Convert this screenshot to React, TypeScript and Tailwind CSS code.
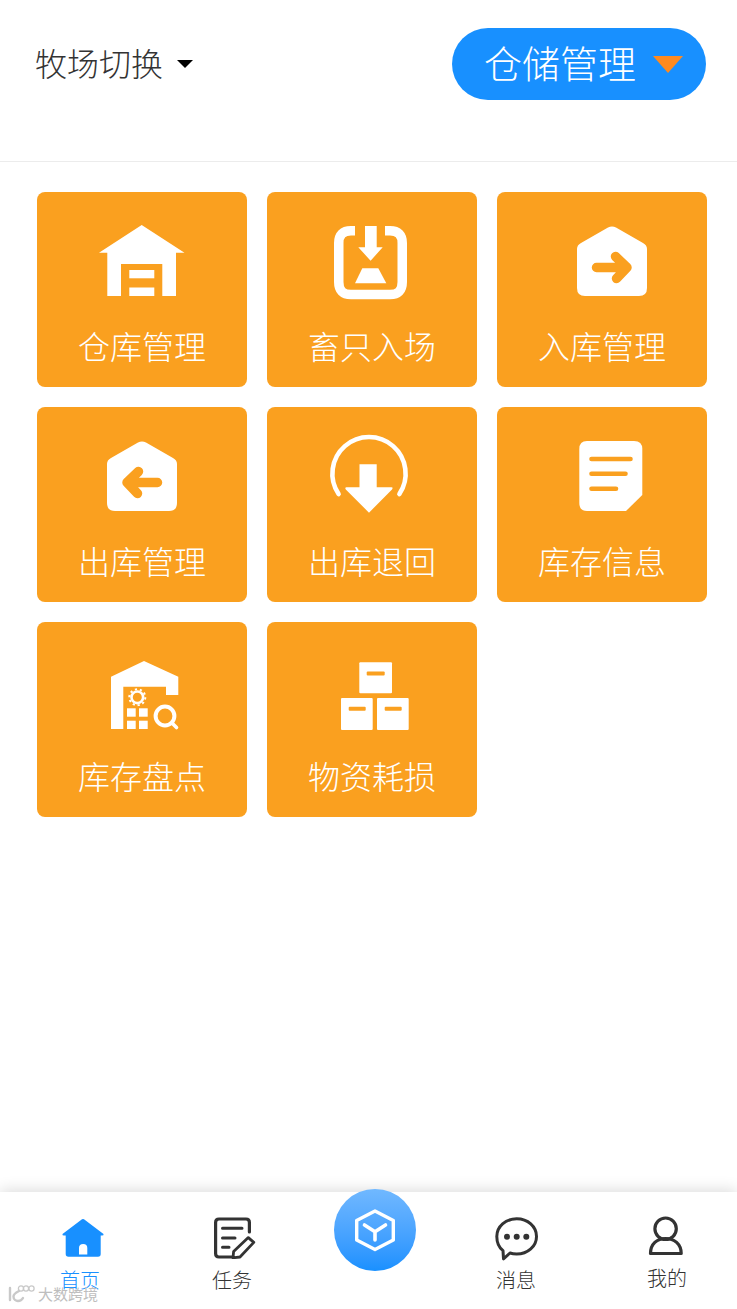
import React from "react";

const O = "#faa01f";
const W = "#ffffff";

function Icon({ vb, children }: { vb: string; children: React.ReactNode }) {
  return (
    <svg width={100} height={90} viewBox={vb} className="block">
      {children}
    </svg>
  );
}

const house = (x: number, y: number) =>
  `M${x} ${y + 23} Q${x} ${y + 19} ${x + 4} ${y + 17} L${x + 31} ${y + 1.5} Q${x + 35} ${y - 0.5} ${x + 39} ${y + 1.5} L${x + 66} ${y + 17} Q${x + 70} ${y + 19} ${x + 70} ${y + 23} V${y + 62} Q${x + 70} ${y + 70} ${x + 62} ${y + 70} H${x + 8} Q${x} ${y + 70} ${x} ${y + 62} Z`;

const icons: React.ReactNode[] = [
  <Icon vb="92 217 100 90" key="a">
    <path fill={W} d="M141.7 225 L184.5 252.7 H176 V296 H162.3 V264 H121 V296 H107.3 V252.7 H99 Z" />
    <rect x={129.3} y={270} width={25} height={8.3} fill={W} />
    <rect x={129.3} y={287.5} width={25} height={8.5} fill={W} />
  </Icon>,
  <Icon vb="322 217 100 90" key="b">
    <path fill="none" stroke={W} strokeWidth={9.5} d="M355 230.75 H351 Q338.75 230.75 338.75 243 V282 Q338.75 294.6 351 294.6 H390 Q402.25 294.6 402.25 282 V243 Q402.25 230.75 390 230.75 H385" />
    <path fill={W} d="M365 226 H376.7 V247.3 H382.7 L370.6 260.7 L358.3 247.3 H365 Z" />
    <path fill={W} d="M362.3 268.3 H378.3 L386.3 283.3 H355 Z" />
  </Icon>,
  <Icon vb="552 217 100 90" key="c">
    <path fill={W} d={house(577, 226)} />
    <path fill="none" stroke={O} strokeWidth={9.5} strokeLinecap="round" strokeLinejoin="round" d="M596.5 267.5 H625 M615.5 256.5 L627 267.5 L616.5 278.5" />
  </Icon>,
  <Icon vb="92 432 100 90" key="d">
    <path fill={W} d={house(107, 441)} />
    <path fill="none" stroke={O} strokeWidth={9.5} strokeLinecap="round" strokeLinejoin="round" d="M157.5 482.5 H129 M138.5 471.5 L127 482.5 L137.5 493.5" />
  </Icon>,
  <Icon vb="322 432 100 90" key="e">
    <path fill="none" stroke={W} strokeWidth={4.6} strokeLinecap="round" d="M338.6 494 A36.6 36.6 0 1 1 399.4 494" />
    <path fill={W} d="M359.5 464.3 H376.7 V487.3 H391.5 Q393.5 487.5 392 489.5 L369 512.7 L345.8 489.5 Q344.5 487.5 346.5 487.3 H359.5 Z" />
  </Icon>,
  <Icon vb="552 432 100 90" key="f">
    <path fill={W} d="M587 441 H634 Q642.3 441 642.3 449 V495 L626 511 H587 Q579.3 511 579.3 503 V449 Q579.3 441 587 441 Z" />
    <path fill="none" stroke={O} strokeWidth={4.6} strokeLinecap="round" d="M591.5 459 H630.5 M591.5 473.7 H625.5 M591.5 488.7 H616" />
  </Icon>,
  <Icon vb="92 647 100 90" key="g">
    <path fill={W} d="M111 729 V676.7 L144 661 L178.3 676.7 V695 H166 V686.7 H123.3 V729 Z" />
    <circle cx={137.3} cy={697.3} r={5.8} fill="none" stroke={W} strokeWidth={2.6} />
    <circle cx={137.3} cy={697.3} r={8} fill="none" stroke={W} strokeWidth={2} strokeDasharray="2.2 2.8" />
    <rect x={127} y={708.3} width={8.7} height={8.4} fill={W} />
    <rect x={139} y={708.3} width={8.7} height={8.4} fill={W} />
    <rect x={127} y={720.7} width={8.7} height={8.3} fill={W} />
    <rect x={139} y={720.7} width={8.7} height={8.3} fill={W} />
    <circle cx={165} cy={716} r={9.4} fill="none" stroke={W} strokeWidth={4} />
    <path stroke={W} strokeWidth={3.6} strokeLinecap="round" d="M172 723 L176.5 727.5" />
  </Icon>,
  <Icon vb="322 647 100 90" key="h">
    <rect x={359.3} y={662.3} width={32.7} height={31} rx={1} fill={W} />
    <rect x={366.7} y={671.5} width={18} height={4} rx={1} fill={O} />
    <rect x={341} y={698} width={31.7} height={32} rx={1} fill={W} />
    <rect x={348.7} y={706.7} width={17} height={4} rx={1} fill={O} />
    <rect x={377} y={698} width={31.7} height={32} rx={1} fill={W} />
    <rect x={384.7} y={706.7} width={17} height={4} rx={1} fill={O} />
  </Icon>,
];

const labels = ["仓库管理", "畜只入场", "入库管理", "出库管理", "出库退回", "库存信息", "库存盘点", "物资耗损"];

const D = "#333333";

function Tab({ label, color, children, ml, labelClass }: { label: string; color: string; children: React.ReactNode; ml: string; labelClass: string }) {
  return (
    <div className={`flex w-[60px] flex-col items-center ${ml}`}>
      {children}
      <span className={`text-[20px] leading-[28px] whitespace-nowrap ${labelClass}`} style={{ color }}>
        {label}
      </span>
    </div>
  );
}

export default function App() {
  return (
    <div className="flex h-[1309px] w-[737px] flex-col overflow-hidden bg-white font-['Noto_Sans_CJK_SC',sans-serif] font-light">
      <header className="flex h-[162px] shrink-0 items-start justify-between border-b border-[#ececec] pt-[28px] pr-[31px] pl-[35px]">
        <div className="flex h-[72px] items-center">
          <span className="-mt-[4px] text-[32px] leading-none text-[#333333]">牧场切换</span>
          <span className="-mt-[1px] ml-[14px] h-0 w-0 border-x-[8px] border-t-[8px] border-x-transparent border-t-black" />
        </div>
        <div className="flex h-[72px] w-[254px] items-center rounded-full bg-[#1890ff] pl-[32px]">
          <span className="-mt-[4px] text-[38px] leading-none text-white">仓储管理</span>
          <span className="ml-[17px] h-0 w-0 border-x-[15px] border-t-[17px] border-x-transparent border-t-[#ff8a1f]" />
        </div>
      </header>

      <main className="grid flex-1 grid-cols-[210px_210px_210px] content-start gap-5 pt-[30px] pl-[37px]">
        {labels.map((l, i) => (
          <div key={l} className="flex h-[195px] flex-col items-center rounded-[8px] bg-[#faa01f] pt-[25px]">
            {icons[i]}
            <span className="mt-[20px] text-[32px] leading-[36px] text-white">{l}</span>
          </div>
        ))}
      </main>

      <nav className="relative flex h-[117px] shrink-0 items-start bg-white pt-[25px] pl-[53px] shadow-[0_-2px_14px_rgba(0,0,0,0.14)]">
        <Tab label="首页" color="#1890ff" ml="" labelClass="mt-[7px] -ml-[6px]">
          <svg width={44} height={42} viewBox="61 1218 44 42" className="block">
            <path fill="#1890ff" d="M83 1220 Q84 1220 85 1221 L103.5 1235 Q104 1236.5 102 1236.5 H100.7 V1255 Q100.7 1257.7 98 1257.7 H68.5 Q65.7 1257.7 65.7 1255 V1236.5 H64 Q62 1236.5 62.5 1235 L81 1221 Q82 1220 83 1220 Z" />
            <path fill="#fff" d="M79 1255.5 V1249 Q79 1245 83.2 1245 Q87.3 1245 87.3 1249 V1255.5 Z" />
          </svg>
        </Tab>
        <Tab label="任务" color={D} ml="ml-[89px]" labelClass="mt-[7px]">
          <svg width={44} height={42} viewBox="212 1218 44 42" className="ml-[4px] block">
            <path fill="none" stroke={D} strokeWidth={3.2} strokeLinecap="round" d="M232 1258 H219 Q215.6 1258 215.6 1254.5 V1223.5 Q215.6 1220 219 1220 H246 Q249.4 1220 249.4 1223.5 V1233" />
            <path fill="none" stroke={D} strokeWidth={3} strokeLinecap="round" d="M222.5 1229.3 H242 M222.5 1239 H235 M222.5 1248.3 H229" />
            <path fill="none" stroke={D} strokeWidth={2.8} strokeLinejoin="round" d="M248.3 1238.6 L253.8 1243.4 L240 1258 L233 1258.8 L233.6 1252.6 Z" />
          </svg>
        </Tab>
        <Tab label="消息" color={D} ml="ml-[224px]" labelClass="mt-[5px]">
          <svg width={46} height={44} viewBox="494 1218 46 44" className="ml-[2px] block">
            <path fill="none" stroke={D} strokeWidth={3} strokeLinejoin="round" d="M516.7 1219.8 C527.8 1219.8 536.5 1227.6 536.5 1237.4 C536.5 1247.2 527.8 1255 516.7 1255 C514.2 1255 512 1254.7 510 1254 L503.5 1259.8 L503 1251.6 C499 1248.4 496.8 1243.2 496.8 1237.4 C496.8 1227.6 505.6 1219.8 516.7 1219.8 Z" />
            <circle cx={507} cy={1237.7} r={3} fill={D} />
            <circle cx={516.7} cy={1237.7} r={3} fill={D} />
            <circle cx={526.3} cy={1237.7} r={3} fill={D} />
          </svg>
        </Tab>
        <Tab label="我的" color={D} ml="ml-[91px]" labelClass="mt-[6px]">
          <svg width={44} height={42} viewBox="645 1218 44 42" className="block -mt-[1px]">
            <circle cx={665.6} cy={1230.7} r={10.7} fill="none" stroke={D} strokeWidth={3.2} />
            <path fill="none" stroke={D} strokeWidth={3.2} strokeLinejoin="round" d="M650.5 1255.5 C650.5 1246 657 1240.5 665.6 1240.5 C674.2 1240.5 681.2 1246 681.2 1255.5 Z" />
          </svg>
        </Tab>

        <div className="absolute top-[-3px] left-[334px] flex h-[82px] w-[82px] items-center justify-center rounded-full bg-gradient-to-b from-[#70b8ff] to-[#1890ff]">
          <svg width={44} height={46} viewBox="353 1207 44 46" className="block">
            <path fill="none" stroke={W} strokeWidth={3.4} strokeLinejoin="round" d="M375 1211 L393.3 1220.5 V1240 L375 1249.5 L356.7 1240 V1220.5 Z" />
            <path fill="none" stroke={W} strokeWidth={3.6} strokeLinecap="round" strokeLinejoin="round" d="M364.5 1225 L375 1231.7 L385.5 1225 M375 1231.7 V1240" />
          </svg>
        </div>

        <div className="absolute top-[93px] left-[8px] flex items-center gap-[3px] opacity-90">
          <svg width={27} height={18} viewBox="0 0 27 18" className="block">
            <path fill="none" stroke="#c4c4c4" strokeWidth={2.4} strokeLinecap="round" d="M2 3 V15 M11 6 C7 8 5.5 9.5 5.5 11.5 C5.5 14.5 8 16 10 16 C12.5 16 14 14.8 15 13" />
            <circle cx={13} cy={3.5} r={2.6} fill="none" stroke="#c4c4c4" strokeWidth={1.3} />
            <circle cx={18} cy={3.5} r={2.6} fill="none" stroke="#c4c4c4" strokeWidth={1.3} />
            <circle cx={23.5} cy={3.5} r={2.6} fill="none" stroke="#c4c4c4" strokeWidth={1.3} />
          </svg>
          <span className="text-[15px] leading-[18px] font-normal text-[#b8b8b8] [text-shadow:0_0_1px_#ffffff]">大数跨境</span>
        </div>
      </nav>
    </div>
  );
}
